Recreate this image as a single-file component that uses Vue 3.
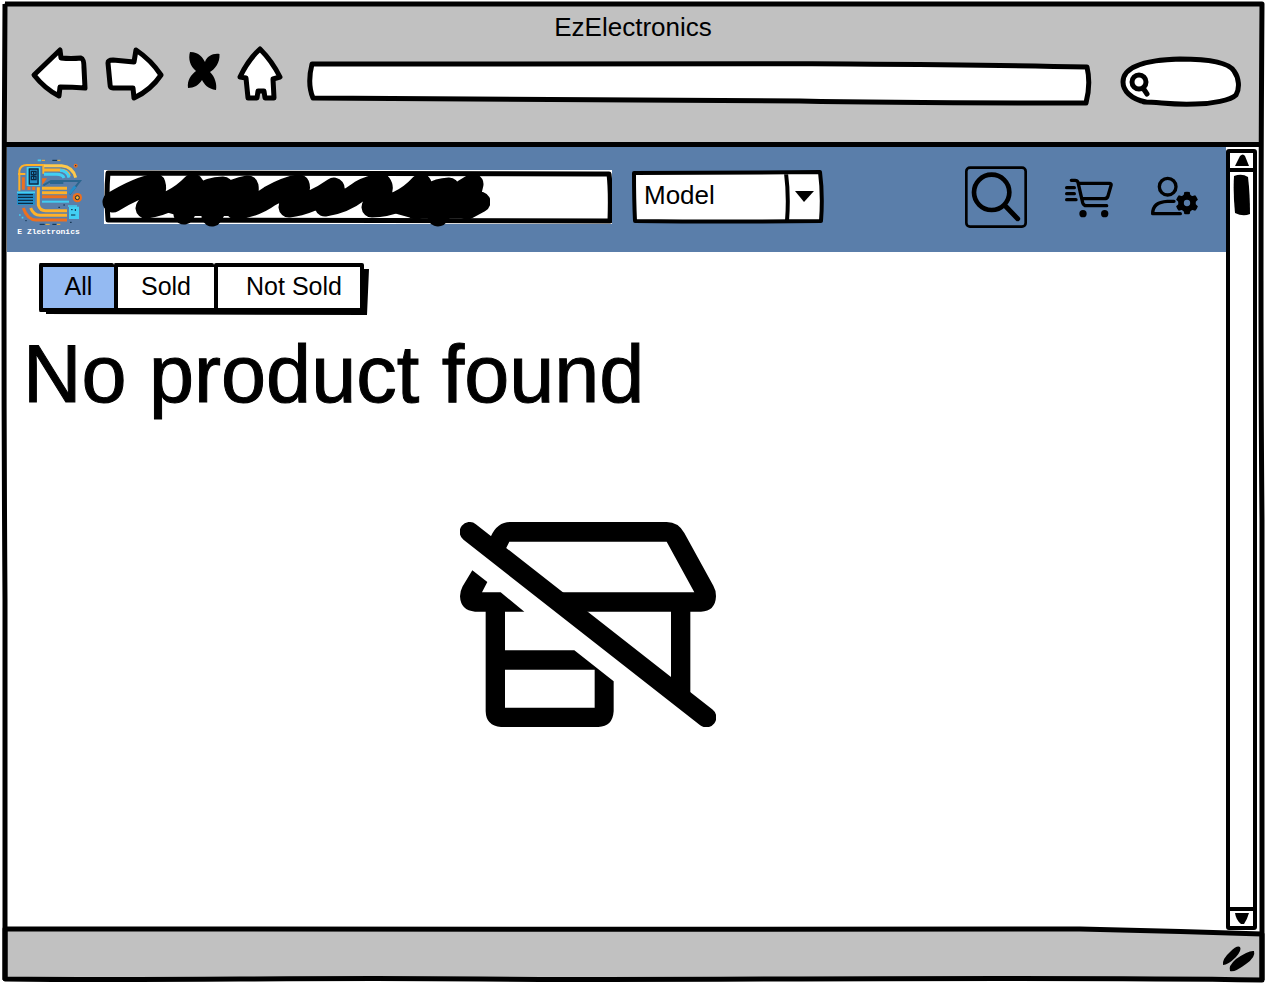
<script setup>
import { ref } from 'vue'

const address = ref('')
const quickSearch = ref('')
const query = ref('')
const searchBy = ref('Model')
const filters = ['All', 'Sold', 'Not Sold']
const active = ref('All')
const teeth = [0, 60, 120, 180, 240, 300]
</script>

<template>
  <div class="window">
    <header class="chrome">
      <div class="title">EzElectronics</div>
      <div class="nav">
        <button class="plain" aria-label="Back">
          <svg class="line" width="60" height="62" viewBox="30 45 60 62"><path d="M34 75 L60 50 L61 58 Q71 59 81 58 Q84 59 84 68 L85 88 Q72 87 60 87 L59 96 Q45 89 34 75Z" /></svg>
        </button>
        <button class="plain" aria-label="Forward">
          <svg class="line" width="60" height="62" viewBox="104 45 60 62"><path d="M108 63 Q108 60 113 60 L134 62 L136 50 Q151 60 161 75 Q151 90 134 98 L133 88 L113 88 Q110 88 110 84Z" /></svg>
        </button>
        <button class="plain" aria-label="Stop">
          <svg width="44" height="62" viewBox="178 45 44 62"><path d="M190 52C199 52 203 58 205 62C207 56 213 53 219.500 54C220 63 215 69 210 72C215 77 217 84 216 90C208 89 204 84 202 80C199 85 194 88 188 88C187 80 191 75 196 71C190 66 188 59 190 52Z" /></svg>
        </button>
        <button class="plain" aria-label="Home">
          <svg class="line" width="48" height="62" viewBox="236 45 48 62"><path d="M260 49 Q272 61 280 77 L273 79 L274 98 L265 98 L264 91 L258 91 L257 98 L248 98 L246 78 L240 77 Q248 60 260 49Z" /></svg>
        </button>
        <div class="stack address">
          <svg class="line" viewBox="306 45 786 62" preserveAspectRatio="none"><path d="M312 64 C560 65 700 63 850 64 Q1000 65 1087 67 Q1091 84 1086 103 Q900 103 800 101 Q550 99 313 98 Q307 84 312 64Z" /></svg>
          <input v-model="address" type="text" aria-label="Address" />
        </div>
        <div class="stack quick">
          <svg class="line" width="122" height="62" viewBox="1120 45 122 62">
            <path d="M1146 102C1130 99 1123 90 1123 82C1123 68 1142 60 1180 59C1212 59 1229 63 1234 71C1239 78 1240 88 1236 95C1231 100 1212 104 1195 104C1170 105 1160 102 1144 102" />
            <circle cx="1139" cy="82" r="7" /><path d="M1143 88 L1147 94" />
          </svg>
          <input v-model="quickSearch" type="search" aria-label="Web search" />
        </div>
      </div>
    </header>

    <div class="body">
      <main class="page">
        <div class="banner">
          <svg class="logo" width="68" height="78" viewBox="48 54 204 234" role="img" aria-label="E Zlectronics">
            <g fill="none" stroke-width="9">
              <path stroke="#ffb229" d="M58 119V92Q62 75 80 75H130V101M54 102H76M58 119V152" stroke-width="6" />
              <path stroke="#ffc94b" d="M132 77H185Q219 80 227 113" />
              <path stroke="#ffb229" d="M132 90H178Q205 91 208 108" />
              <path stroke="#42cff3" d="M132 103H170Q188 103 192 114M180 91Q202 92 207 113" />
              <path stroke="#ed701f" d="M70 112V149M87 140V150M101 140V150" />
              <path stroke="#2b668f" d="M130 136L153 123H240L209 163M150 129H190" stroke-width="6" />
              <path stroke="#248fca" d="M208 161L226 139" />
              <path stroke="#ffb229" d="M115 142V195Q120 212 136 212H201M126 145H201M126 158H201" />
              <path stroke="#ed701f" d="M126 170H201M70 204Q82 239 108 240H201" />
              <path stroke="#42cff3" d="M126 185H207" stroke-width="6" />
              <path stroke="#ffb229" d="M92 204Q101 226 120 226H201" />
            </g>
            <path fill="#ed701f" d="M126 115H141L127 135Z" />
            <path fill="#42cff3" d="M80 81H121V138H80ZM207 200H237V237H207Z" />
            <path fill="#248fca" d="M86 87H117V133H86ZM51 156H105V195H51Z" />
            <path stroke="#0b2b45" stroke-width="4" fill="none" d="M88 87H114V132H88ZM94 94H108V104H94ZM94 109H108V119H94ZM101 94V119M54 164H99M54 172H99M54 181H99M54 190H99" />
            <path stroke="#42cff3" stroke-width="5" d="M51 157H105M204 198H231M57 225H62M65 233H70M113 61H123" />
            <path stroke="#0b2b45" stroke-width="3" d="M213 209H218M226 207V213M213 225H226M157 61H172M76 242H80M119 253H134M157 253H169M210 247H215M190 195H195M175 202H180" />
            <path stroke="#ffb229" stroke-width="3" d="M125 61H135M172 61H181M137 253H149M171 253H181" />
            <circle cx="232" cy="173" r="14" fill="#ed701f" /><circle cx="232" cy="173" r="6" fill="#ffb229" stroke="#0b2b45" stroke-width="3" />
            <circle cx="227" cy="77" r="6" fill="#ed701f" /><circle cx="227" cy="77" r="2" fill="#0b2b45" />
            <text x="52" y="281">E Zlectronics</text>
          </svg>

          <div class="stack query">
            <svg class="line" viewBox="104 170 508 54" preserveAspectRatio="none"><path d="M108 173 C250 172 430 173 609 174 Q611 190 610 221 C400 221 250 221 108 220 Q106 195 108 173Z" /></svg>
            <input v-model="query" type="text" aria-label="Search products" />
            <svg class="scribble" width="388" height="58" viewBox="102 170 388 58">
              <path d="M113 202 Q138 187 155 184 Q158 194 146 208 Q174 204 193 184 Q194 198 184 214 Q196 188 223 187 Q220 203 212 216 Q222 190 248 186 Q250 198 236 209 Q255 207 270 196 Q286 187 299 185 Q302 192 289 207 Q310 205 334 188 L325 206 Q343 204 360 191 Q371 185 381 184 Q386 191 372 207 Q400 207 421 184 L416 209 Q428 189 449 188 L438 216 Q454 194 473 184 L467 209 L480 202" />
              <path class="ink" d="M152 206L193 186L205 200L223 188L232 200L248 188L262 200L246 214H180ZM293 206L334 190V206L318 208ZM376 206L421 186L430 198L449 190L460 196L473 186L480 204L466 216H412Z" />
            </svg>
          </div>

          <div class="stack select">
            <svg class="line" viewBox="632 170 192 54" preserveAspectRatio="none">
              <path d="M634 173 Q730 173 820 172 Q823 195 821 221 Q730 222 635 221 Q634 200 634 173ZM786 173 Q789 196 787 221" />
              <path class="solid" d="M795 191H814L804 202Z" />
            </svg>
            <select v-model="searchBy" aria-label="Search by">
              <option>Model</option>
              <option>Category</option>
            </select>
          </div>

          <div class="actions">
            <button class="plain" aria-label="Search">
              <svg class="glyph" width="62" height="62" viewBox="45 36 186 186">
                <rect x="49" y="41" width="178" height="177" rx="11" stroke-width="8" />
                <circle cx="125" cy="115" r="53" stroke-width="14" /><path d="M164 154L203 194" stroke-width="15" />
              </svg>
            </button>
            <button class="plain" aria-label="Cart">
              <svg class="glyph" width="48" height="48" viewBox="348 54 144 144">
                <path d="M367 76H378Q385 76 387 82L401 143Q404 152 412 152H473M388 85H481Q488 85 486 92L477 123Q475 131 466 131H400M353 98H376M353 116H376M353 134H381" />
                <circle class="dot" cx="402" cy="176" r="11" /><circle class="dot" cx="467" cy="176" r="11" />
              </svg>
            </button>
            <button class="plain" aria-label="Account settings">
              <svg class="glyph" width="48" height="48" viewBox="606 54 144 144">
                <circle cx="656" cy="95" r="25" />
                <path d="M675 139H655Q611 141 611 176H694" />
                <circle cx="714" cy="144" r="18" stroke-width="17" />
                <path v-for="a in teeth" :key="a" class="dot" d="M703 124L706 111Q714 109 722 111L725 124Z" :transform="`rotate(${a} 714 144)`" />
              </svg>
            </button>
          </div>
        </div>

        <div class="stack tabs" role="group" aria-label="Filter products">
          <svg viewBox="38 262 332 54" preserveAspectRatio="none"><path d="M46 309L362 309L363 269L369 269L367 315L46 314Z" /></svg>
          <div class="tabrow">
            <button v-for="f in filters" :key="f" :class="{ on: active === f }" :aria-pressed="active === f" @click="active = f">{{ f }}</button>
          </div>
        </div>

        <h1>No product found</h1>

        <div class="empty">
          <svg width="256" height="205" viewBox="60 64 768 615" aria-hidden="true">
            <path d="M89 94L799 650" stroke="#000" stroke-width="60" stroke-linecap="round" />
            <path d="M152 108Q172 64 210 64H680Q715 64 733 97L820 255Q828 268 828 287Q826 332 783 333H751V590L693 540V333H440L355 275H763L680 123H208L196 147Z" />
            <path fill-rule="evenodd" d="M97 209L142 244L126 275H182L253 333H195V449H403L521 542V632Q518 678 475 679H183Q138 676 137 632V333H105Q62 330 60 287Q60 272 68 257ZM195 507H464V621H195Z" />
          </svg>
        </div>
      </main>

      <div class="scroll">
        <button class="plain up" aria-label="Scroll up"><svg width="16" height="13" viewBox="0 0 16 13"><path d="M1 12L6 2Q9 -1 11 2L15 12Z" /></svg></button>
        <div class="track"><svg width="18" height="42" viewBox="0 0 18 42"><path d="M1 2Q9 -1 15 3Q17 20 17 40Q10 43 2 39Q0 20 1 2Z" /></svg></div>
        <button class="plain down" aria-label="Scroll down"><svg width="16" height="13" viewBox="0 0 16 13"><path d="M1 1H15Q13 8 10 12H7Q2 8 1 1Z" /></svg></button>
      </div>
    </div>

    <footer class="status">
      <svg class="base" viewBox="0 926 1266 58" preserveAspectRatio="none">
        <path d="M5 929 C200 931 800 928 1080 929 Q1170 931 1262 934 V980 C1000 976 700 981 480 979 C300 977 180 981 5 979Z" />
      </svg>
      <svg class="grip" width="34" height="28" viewBox="1222 945 34 28"><path d="M1223 965Q1222 959 1230 952Q1237 945 1240 947Q1242 950 1236 957Q1228 965 1223 965ZM1230 971Q1228 966 1236 959Q1249 950 1254 951Q1256 957 1246 964Q1234 973 1230 971Z" /></svg>
    </footer>

    <svg class="frame" viewBox="0 0 1266 984" preserveAspectRatio="none" aria-hidden="true">
      <path d="M5 4 L1262 4 Q1260 300 1262 520 L1262 980 M5 4 Q3 300 5 600 L5 980" />
    </svg>
  </div>
</template>

<style>
body {
  margin: 0;
  background: #fff;
}
</style>

<style scoped>
.window {
  position: relative;
  display: flex;
  flex-direction: column;
  min-height: 100vh;
  color: #000;
  font-family: "Liberation Sans", Arial, sans-serif;
  font-size: 26px;
  line-height: 30px;
}
svg {
  display: block;
}
.plain {
  display: block;
  flex: none;
  padding: 0;
  border: 0;
  background: none;
  cursor: pointer;
}
.line {
  fill: #fff;
  stroke: #000;
  stroke-width: 5px;
  stroke-linejoin: round;
  stroke-linecap: round;
}
.line path {
  vector-effect: non-scaling-stroke;
}
.stack {
  display: grid;
}
.stack > * {
  grid-area: 1 / 1;
  box-sizing: border-box;
  width: 100%;
  height: 100%;
  min-width: 0;
}
.stack input,
.stack select {
  appearance: none;
  border: 0;
  outline: 0;
  background: transparent;
  color: #000;
  font: inherit;
  padding: 0 12px;
}
.frame {
  position: absolute;
  inset: 0;
  width: 100%;
  height: 100%;
  pointer-events: none;
  fill: none;
  stroke: #000;
  stroke-width: 5px;
  stroke-linejoin: round;
}
.chrome {
  margin: 3px 4px 0;
  padding: 9px 20px 35px;
  background: #c1c1c1;
  border-bottom: 5px solid #000;
}
.title {
  text-align: center;
}
.nav {
  display: flex;
  align-items: center;
  gap: 14px;
  margin-top: 3px;
  padding-left: 6px;
}
.address {
  flex: 1;
  height: 62px;
  margin: 0 14px 0 8px;
}
.quick {
  flex: none;
  width: 122px;
  height: 62px;
}
.quick input {
  padding-left: 32px;
}
.body {
  flex: 1;
  display: flex;
  margin: 0 7px;
}
.page {
  flex: 1;
  min-width: 0;
}
.banner {
  display: flex;
  align-items: center;
  gap: 20px;
  padding: 11px 27px 16px 9px;
  background: #5a7eaa;
}
.logo {
  flex: none;
}
.logo text {
  font: bold 24px "Liberation Mono", monospace;
  fill: #fff;
}
.query {
  position: relative;
  flex: 0 1 508px;
  height: 54px;
  background: #fff;
}
.query .scribble {
  position: absolute;
  left: -2px;
  top: 0;
  width: 388px;
  height: 58px;
  fill: none;
  stroke: #000;
  stroke-width: 21px;
  stroke-linecap: round;
  stroke-linejoin: round;
  pointer-events: none;
}
.scribble .ink {
  fill: #000;
  stroke-width: 4px;
}
.select {
  flex: none;
  width: 192px;
  height: 54px;
}
.select .line {
  stroke-width: 4px;
}
.select .solid {
  fill: #000;
  stroke: none;
}
.select select {
  padding-bottom: 4px;
}
.actions {
  display: flex;
  align-items: center;
  gap: 38px;
  margin-left: auto;
}
.glyph {
  fill: none;
  stroke: #000;
  stroke-width: 10px;
  stroke-linecap: round;
  stroke-linejoin: round;
}
.glyph .dot {
  fill: #000;
  stroke: none;
}
.tabs {
  width: 332px;
  height: 54px;
  margin: 10px 0 0 31px;
}
.stack > .tabrow {
  display: grid;
  grid-template-columns: 75px 100px 1fr;
  width: 326px;
  height: 50px;
  padding: 1px 0 0 1px;
}
.tabrow button {
  border: 4px solid #000;
  border-right-width: 0;
  border-radius: 2px;
  background: #fff;
  color: #000;
  font: inherit;
  font-size: 25px;
  padding: 0 0 4px;
  cursor: pointer;
}
.tabrow button:last-child {
  border-right-width: 4px;
  padding-left: 10px;
}
.tabrow .on {
  background: #94baf2;
}
h1 {
  margin: 12px 0 0 16px;
  font-size: 81px;
  line-height: 92px;
  font-weight: 400;
  -webkit-text-stroke: 1px #000;
}
.empty {
  display: flex;
  justify-content: center;
  padding: 102px 58px 40px 0;
}
.scroll {
  flex: none;
  box-sizing: border-box;
  display: flex;
  flex-direction: column;
  width: 31px;
  margin: 2px 2px 0 0;
  border: 4px solid #000;
  border-radius: 3px;
}
.up,
.down {
  display: flex;
  align-items: center;
  justify-content: center;
  height: 19px;
}
.up {
  border-bottom: 4px solid #000;
}
.down {
  border-top: 4px solid #000;
}
.track {
  flex: 1;
  display: flex;
  justify-content: center;
  align-items: flex-start;
  padding-top: 2px;
}
.status {
  position: relative;
  height: 54px;
}
.base {
  position: absolute;
  left: 0;
  bottom: 0;
  width: 100%;
  height: 58px;
  fill: #c1c1c1;
  stroke: #000;
  stroke-width: 5px;
  stroke-linejoin: round;
}
.grip {
  position: absolute;
  right: 10px;
  bottom: 11px;
}
</style>
